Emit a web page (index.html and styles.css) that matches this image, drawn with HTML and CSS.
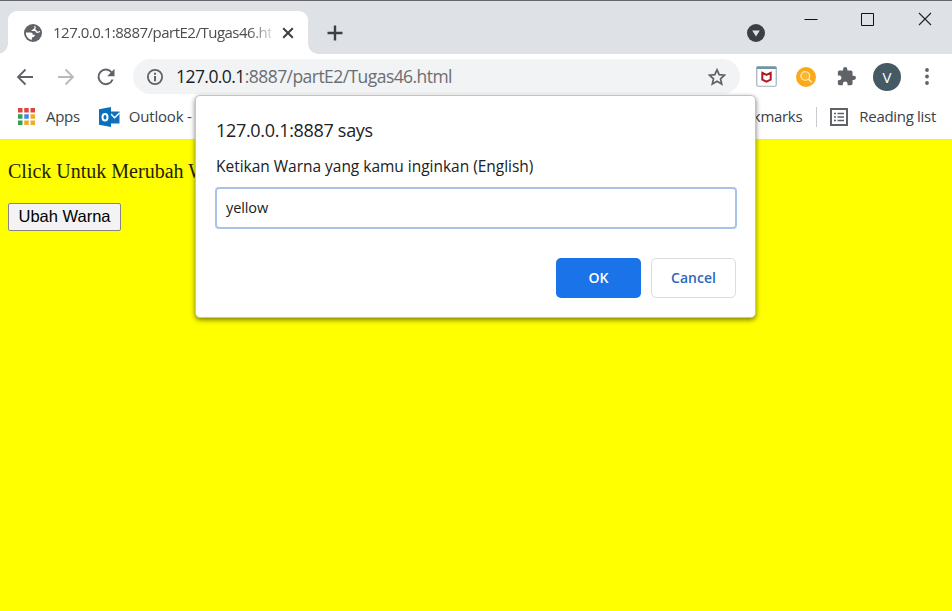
FILE: index.html
```html
<!DOCTYPE html>
<html lang="en">
<head>
<meta charset="utf-8">
<title>127.0.0.1:8887/partE2/Tugas46.html</title>
<link rel="stylesheet" href="styles.css">
</head>
<body>
<div class="window">
  <header class="tabstrip">
    <div class="tab">
      <svg class="globe" width="18" height="18" viewBox="0 0 18 18"><circle cx="9" cy="9" r="9" fill="#5f6368"/><path d="M10.200 1.900c3.300.6 5.600 3.300 6 6.500-1.100-.3-1.700.9-3.200.6-1.500-.2-1.100-2-2.500-2H7.400c.2-1.100 1.300-1 1.900-1.900 1.200-.3 1.500-1.900.9-3.200Z" fill="#fff"/><path d="M11.400 1.500c2.600.8 4.700 3 5.300 5.600-1.500-.3-2 .7-3.200.5-1.200-.1-.7-1.700-2.300-2 .7-1.300.7-2.800.2-4.100Z" fill="#5f6368"/><path d="M1.900 8.600h4.500c1.700 0 2.300.9 2.300 2.200h2.200c.1 1.700-1 2.300-2.500 2.500-.6.700-.5 1.800-.7 2.700-3.400-.6-5.900-3.700-5.800-7.400Z" fill="#fff"/></svg>
      <span class="tab-title">127.0.0.1:8887/partE2/Tugas46.html</span>
      <svg class="tab-close" width="12" height="12" viewBox="0 0 12 12"><path d="m1.200 1.200 9.600 9.600m0-9.600-9.600 9.600" stroke="#3c4043" stroke-width="2"/></svg>
    </div>
    <svg class="newtab" width="16" height="16" viewBox="0 0 16 16"><path d="M8 .5v15M.5 8h15" stroke="#3c4043" stroke-width="2.400"/></svg>
    <svg class="search-tabs" width="18" height="18" viewBox="0 0 18 18"><circle cx="9" cy="9" r="9" fill="#3c4043"/><path d="M5.200 6.500h7.600L9 12.500Z" fill="#dee1e6"/></svg>
    <div class="controls">
      <svg width="14" height="14" viewBox="0 0 14 14"><path d="M.5 7.500h13" stroke="#111"/></svg>
      <svg width="14" height="14" viewBox="0 0 14 14"><path d="M1.500 1.500h12v12h-12Z" fill="none" stroke="#111"/></svg>
      <svg width="14" height="14" viewBox="0 0 14 14"><path d="m1 1 12 12m0-12L1 13" stroke="#222" stroke-width="1.100"/></svg>
    </div>
  </header>
  <div class="toolbar">
    <svg class="back" width="18" height="18" viewBox="0 0 18 18"><path d="M17 9H2m7.500-7.500L2 9l7.500 7.500" fill="none" stroke="#5f6368" stroke-width="1.800"/></svg>
    <svg class="forward" width="18" height="18" viewBox="0 0 18 18"><path d="M1 9h15M8.500 1.500 16 9l-7.500 7.500" fill="none" stroke="#b7b9bc" stroke-width="1.800"/></svg>
    <svg class="reload" width="18" height="18" viewBox="0 0 18 18"><path d="M15.600 11.500A7.300 7.300 0 1 1 14.700 4.500" fill="none" stroke="#5f6368" stroke-width="2"/><path d="M17.500.8v7.400h-7.300Z" fill="#5f6368"/></svg>
    <div class="omnibox">
      <svg width="16" height="16" viewBox="0 0 16 16"><circle cx="8" cy="8" r="7.100" fill="none" stroke="#5f6368" stroke-width="1.800"/><path d="M8 3.800v2M8 7v5.200" stroke="#5f6368" stroke-width="2"/></svg>
      <span class="url"><b>127.0.0.1</b>:8887/partE2/Tugas46.html</span>
      <svg class="star" width="18" height="18" viewBox="0 0 18 18"><path d="m9 1.800 2.200 4.900 5.300.5-4 3.600 1.200 5.300L9 13.300l-4.700 2.800 1.200-5.300-4-3.600 5.300-.5Z" fill="none" stroke="#5f6368" stroke-width="1.700"/></svg>
    </div>
    <svg class="mcafee" width="21" height="21" viewBox="0 0 21 21"><rect x=".75" y=".75" width="19.500" height="19.500" rx="1.500" fill="#fff" stroke="#a2afb8" stroke-width="1.200"/><path d="M.5 1.500Q.5.5 1.500.5h18q1 0 1 1V3H.5Z" fill="#7196a9"/><path d="M6.300 6.800v6.900l4.200 2 4.200-2V6.800l-4.200 2.100Z" fill="none" stroke="#b01a26" stroke-width="2"/></svg>
    <svg class="finder" width="20" height="20" viewBox="0 0 20 20"><circle cx="10" cy="10" r="10" fill="#fba919"/><circle cx="9.300" cy="9" r="4.400" fill="#fbb733" stroke="#ffe6ae" stroke-width="1.400"/><path d="m12.500 12.200 3.200 3.200" stroke="#ffe6ae" stroke-width="1.800"/></svg>
    <svg class="puzzle" width="19" height="19" viewBox="1 1 22 22"><path fill="#5f6368" d="M20.500 11H19V7c0-1.100-.9-2-2-2h-4V3.500a2.500 2.500 0 0 0-5 0V5H4c-1.100 0-1.990.9-1.990 2v3.800H3.500a2.700 2.700 0 0 1 0 5.400H2V20c0 1.100.9 2 2 2h3.800v-1.500a2.700 2.700 0 0 1 5.400 0V22H17c1.100 0 2-.9 2-2v-4h1.500a2.500 2.500 0 0 0 0-5Z"/></svg>
    <span class="avatar">V</span>
    <svg class="more" width="4" height="17" viewBox="0 0 4 17"><g fill="#5f6368"><circle cx="2" cy="2" r="1.900"/><circle cx="2" cy="8.500" r="1.900"/><circle cx="2" cy="15" r="1.900"/></g></svg>
  </div>
  <nav class="bookmarks">
    <svg width="17" height="17" viewBox="0 0 17 17"><path fill="#d8483e" d="M0 0h4.500v4.500H0ZM6.250 0h4.500v4.500h-4.500ZM12.500 0H17v4.500h-4.500Z"/><path fill="#3a9e58" d="M0 6.250h4.500v4.500H0ZM0 12.500h4.500V17H0Z"/><path fill="#4384e8" d="M6.250 6.250h4.500v4.500h-4.500Z"/><path fill="#e9ad32" d="M12.500 6.250H17v4.500h-4.500ZM6.250 12.500h4.500V17h-4.500ZM12.500 12.500H17V17h-4.500Z"/></svg>
    <span class="apps">Apps</span>
    <svg class="outlook" width="21" height="20" viewBox="0 0 21 20"><path d="M11 4.500h9.500v12H11Z" fill="#0f6fbd"/><path d="m12 7 3.600 3.700L20.500 6" fill="none" stroke="#fff" stroke-width="1.500"/><path d="m0 2.200 12-2.200v20L0 17.800Z" fill="#0870bf"/><ellipse cx="6" cy="10.200" rx="2.500" ry="3.200" fill="none" stroke="#fff" stroke-width="2"/></svg>
    <span class="outlook-label">Outlook -</span>
    <span class="other">Other bookmarks</span>
    <i class="divider"></i>
    <svg width="18" height="18" viewBox="0 0 18 18"><rect x="1" y="1" width="16" height="16" fill="none" stroke="#5f6368" stroke-width="2"/><path d="M4 5.500h2M4 9h2m-2 3.500h2M7.500 5.500H14M7.500 9H14m-6.500 3.500H14" stroke="#5f6368" stroke-width="1.500"/></svg>
    <span class="reading">Reading list</span>
  </nav>
  <main class="page">
    <p>Click Untuk Merubah Warna</p>
    <button class="change">Ubah Warna</button>
  </main>
  <section class="dialog" role="dialog">
    <h1>127.0.0.1:8887 says</h1>
    <p class="message">Ketikan Warna yang kamu inginkan (English)</p>
    <div class="field">yellow</div>
    <div class="actions"><button class="ok">OK</button><button class="cancel">Cancel</button></div>
  </section>
</div>
</body>
</html>
```
FILE: styles.css
```css
* { box-sizing: border-box; }
body { margin: 0; overflow: hidden; }
svg { display: block; flex: none; }
.window { position: relative; width: 952px; height: 611px; display: flex; flex-direction: column; background: #fff; font-family: "Open Sans", "Noto Sans", sans-serif; color: #3c4043; white-space: nowrap; }
.tabstrip { height: 54px; background: #dee1e6; border-top: 1px solid #65666b; display: flex; align-items: flex-start; padding: 10px 20px 0 8px; }
.tab { position: relative; width: 300px; height: 43px; background: #fff; border-radius: 9px 9px 0 0; display: flex; align-items: center; padding: 0 14px 0 16px; }
.tab::before, .tab::after { content: ""; position: absolute; bottom: 0; width: 10px; height: 10px; }
.tab::before { left: -10px; background: radial-gradient(circle at 0 0, transparent 9.5px, #fff 10px); }
.tab::after { right: -10px; background: radial-gradient(circle at 100% 0, transparent 9.5px, #fff 10px); }
.tab-title { width: 219px; margin: -1px 10px 0 11px; overflow: hidden; font-size: 15px; letter-spacing: -.5px; color: #4a4d51; -webkit-mask-image: linear-gradient(90deg, #000 195px, transparent 225px); mask-image: linear-gradient(90deg, #000 195px, transparent 225px); }
.tab-close { margin-left: 1px; }
.newtab { margin: 14px 0 0 19px; }
.search-tabs { margin: 13px 0 0 auto; }
.controls { display: flex; gap: 43px; margin: 1px 0 0 39px; }
.controls svg:nth-child(2) { margin: 0 1px 0 -1px; }
.toolbar { height: 45px; display: flex; align-items: center; padding-left: 16px; }
.forward { margin-left: 23px; }
.reload { margin-left: 22px; }
.omnibox { width: 607px; height: 35px; margin-left: 18px; border-radius: 18px; background: #f1f3f4; display: flex; align-items: center; padding: 0 14px; }
.url { margin: -1px 0 0 13px; font-size: 17.5px; letter-spacing: -.56px; color: #6b6e72; }
.url b { font-weight: 400; color: #202124; }
.star { margin-left: auto; }
.mcafee { margin-left: 16px; }
.finder { margin-left: 19px; }
.puzzle { margin-left: 21px; }
.avatar { width: 28px; height: 28px; margin-left: 17px; border-radius: 50%; background: #455a64; color: #fff; font-size: 15px; display: flex; align-items: center; justify-content: center; }
.more { margin-left: 24px; }
.bookmarks { height: 41px; display: flex; align-items: center; padding: 0 16px 5px 18px; border-bottom: 1px solid #e4e49c; font-size: 15px; letter-spacing: -.3px; }
.bookmarks span { margin-top: -1px; }
.bookmarks .apps { margin-left: 11px; }
.outlook { margin-left: 19px; }
.bookmarks .outlook-label { margin-left: 9px; letter-spacing: -.2px; }
.bookmarks .other { margin-left: auto; }
.divider { width: 1px; height: 20px; margin: 0 13px 0 14px; background: #c9cbcf; }
.bookmarks .reading { margin-left: 11px; }
.page { flex: 1; background: #ff0; padding: 20px 8px; }
.page p { margin: 0 0 20px; font: 20px/23px "Liberation Serif", serif; color: #222200; }
.change { display: block; width: 113px; height: 28px; padding: 0 0 2px; border: 1px solid #858585; border-radius: 2px; background: #f3f3f3; color: #000; font: 16.5px "Liberation Sans", sans-serif; }
.dialog { position: absolute; left: 195px; top: 95px; width: 561px; height: 223px; padding: 22px 19px 20px 20px; background: #fff; border: 1px solid #c4c4c4; border-radius: 5px; box-shadow: 0 2px 5px rgba(0, 0, 0, .5); color: #202124; }
.dialog h1 { margin: 0; font-size: 18px; line-height: 24px; font-weight: 400; letter-spacing: -.31px; }
.message { margin: 13px 0 10px; font-size: 15.5px; line-height: 22px; letter-spacing: -.02px; }
.field { width: 522px; height: 42px; margin-left: -1px; border: 2px solid #a7c4e8; border-radius: 4px; padding-left: 9px; font-size: 14.5px; letter-spacing: -.1px; line-height: 37px; }
.actions { display: flex; justify-content: flex-end; gap: 10px; margin-top: 29px; }
.actions button { width: 85px; height: 40px; padding: 0 0 1px; border-radius: 5px; font: 600 14px "Open Sans", sans-serif; }
.ok { background: #1a73e8; border: 0; color: #fff; }
.cancel { background: #fff; border: 1px solid #dadce0; color: #2f67bd; }
```
